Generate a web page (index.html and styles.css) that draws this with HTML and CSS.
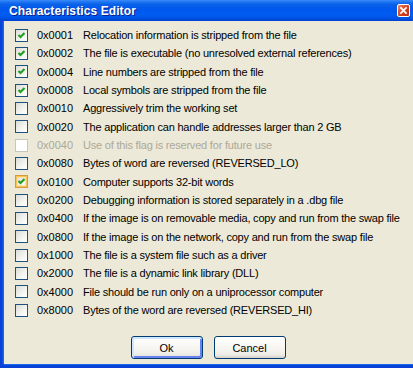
FILE: index.html
```html
<!DOCTYPE html>
<html lang="en">
<head>
    <meta charset="UTF-8">
    <title>Characteristics Editor</title>
    <link rel="stylesheet" href="styles.css">
</head>
<body>
    <div class="window" role="dialog" aria-label="Characteristics Editor">
        <div class="titlebar">
            <span class="title">Characteristics Editor</span>
            <span class="close" aria-label="Close">
                <svg width="13" height="13" viewBox="0 0 13 13">
                    <path d="M3.5 3.5 L9.5 9.5 M9.5 3.5 L3.5 9.5" stroke="#fff" stroke-width="2" stroke-linecap="square"/>
                </svg>
            </span>
        </div>

        <div class="client">
            <ul class="flags">
                <li class="flag"><span class="box checked"><svg viewBox="0 0 11 11"><path d="M2.5 5 L4.5 7 L8.5 3"/></svg></span><span class="hex">0x0001</span><span class="desc">Relocation information is stripped from the file</span></li>
                <li class="flag"><span class="box checked"><svg viewBox="0 0 11 11"><path d="M2.5 5 L4.5 7 L8.5 3"/></svg></span><span class="hex">0x0002</span><span class="desc">The file is executable (no unresolved external references)</span></li>
                <li class="flag"><span class="box checked"><svg viewBox="0 0 11 11"><path d="M2.5 5 L4.5 7 L8.5 3"/></svg></span><span class="hex">0x0004</span><span class="desc">Line numbers are stripped from the file</span></li>
                <li class="flag"><span class="box checked"><svg viewBox="0 0 11 11"><path d="M2.5 5 L4.5 7 L8.5 3"/></svg></span><span class="hex">0x0008</span><span class="desc">Local symbols are stripped from the file</span></li>
                <li class="flag"><span class="box"></span><span class="hex">0x0010</span><span class="desc">Aggressively trim the working set</span></li>
                <li class="flag"><span class="box"></span><span class="hex">0x0020</span><span class="desc">The application can handle addresses larger than 2 GB</span></li>
                <li class="flag disabled"><span class="box"></span><span class="hex">0x0040</span><span class="desc">Use of this flag is reserved for future use</span></li>
                <li class="flag"><span class="box"></span><span class="hex">0x0080</span><span class="desc">Bytes of word are reversed (REVERSED_LO)</span></li>
                <li class="flag"><span class="box checked hover"><svg viewBox="0 0 11 11"><path d="M2.5 5 L4.5 7 L8.5 3"/></svg></span><span class="hex">0x0100</span><span class="desc">Computer supports 32-bit words</span></li>
                <li class="flag"><span class="box"></span><span class="hex">0x0200</span><span class="desc">Debugging information is stored separately in a .dbg file</span></li>
                <li class="flag"><span class="box"></span><span class="hex">0x0400</span><span class="desc">If the image is on removable media, copy and run from the swap file</span></li>
                <li class="flag"><span class="box"></span><span class="hex">0x0800</span><span class="desc">If the image is on the network, copy and run from the swap file</span></li>
                <li class="flag"><span class="box"></span><span class="hex">0x1000</span><span class="desc">The file is a system file such as a driver</span></li>
                <li class="flag"><span class="box"></span><span class="hex">0x2000</span><span class="desc">The file is a dynamic link library (DLL)</span></li>
                <li class="flag"><span class="box"></span><span class="hex">0x4000</span><span class="desc">File should be run only on a uniprocessor computer</span></li>
                <li class="flag"><span class="box"></span><span class="hex">0x8000</span><span class="desc">Bytes of the word are reversed (REVERSED_HI)</span></li>
            </ul>

            <div class="buttons">
                <button class="btn default">Ok</button>
                <button class="btn">Cancel</button>
            </div>
        </div>
    </div>
</body>
</html>
```

FILE: styles.css
```css
/* Global Styles */
body {
    margin: 0;
    padding: 0;
    font-family: 'Liberation Sans', Arial, sans-serif;
    font-size: 11px;
    color: #000;
    background: #ece9d8;
}

.window {
    width: 413px;
    height: 368px;
    display: flex;
    flex-direction: column;
    background: #0842d6;
}

/* Title Bar */
.titlebar {
    height: 21px;
    flex: none;
    display: flex;
    align-items: center;
    justify-content: space-between;
    padding: 0 3px 0 9px;
    background: linear-gradient(to bottom, #3d8cf8 0, #2b7ff6 1px, #0a63e8 4px, #0058ee 9px, #005cf2 15px, #0053e6 18px, #0041d0 21px);
}

.title {
    color: #fff;
    font-weight: bold;
    font-size: 12px;
    letter-spacing: 0.1px;
    text-shadow: 1px 1px 0 #0a1e8c;
    margin-top: 1px;
}

.close {
    width: 13px;
    height: 13px;
    border: 1px solid #fff;
    border-radius: 2px;
    background: linear-gradient(135deg, #e88a6f, #d8431f 50%, #c1300e);
    box-sizing: border-box;
    display: flex;
    align-items: center;
    justify-content: center;
}

.close svg {
    width: 11px;
    height: 11px;
}

/* Client Area */
.client {
    flex: 1;
    margin: 0 0 4px 4px;
    background: #ece9d8;
    display: flex;
    flex-direction: column;
    box-shadow: -1px 0 0 #166aee, -2px 0 0 #0a4fe0, 0 1px 0 #166aee;
}

.flags {
    list-style: none;
    margin: 0;
    padding: 5px 0 0 11px;
}

.flag {
    height: 18.33px;
    display: flex;
    align-items: center;
    white-space: nowrap;
}

.box {
    width: 13px;
    height: 13px;
    box-sizing: border-box;
    border: 1px solid #1c5180;
    background: linear-gradient(135deg, #dcdcd7 0, #f4f4f0 60%, #fff 100%);
    flex: none;
    display: flex;
    align-items: center;
    justify-content: center;
}

.box svg {
    width: 11px;
    height: 11px;
    fill: none;
    stroke: #21a121;
    stroke-width: 2.2;
}

.box.hover {
    border-color: #d29c3c;
    box-shadow: inset 0 0 0 1px #f9c35a, inset 0 0 0 2px #fde2a5;
}

.hex {
    width: 46px;
    margin-left: 9px;
    flex: none;
}

.desc {
    letter-spacing: -0.2px;
}

.flag.disabled {
    color: #aca899;
}

.flag.disabled .box {
    border-color: #c9c7ba;
    background: #fff;
}

/* Buttons */
.buttons {
    display: flex;
    justify-content: center;
    gap: 11px;
    margin-top: 17px;
    padding-right: 1px;
}

.btn {
    width: 72px;
    height: 23px;
    font-family: 'Liberation Sans', Arial, sans-serif;
    font-size: 11px;
    color: #000;
    border: 1px solid #003c74;
    border-radius: 3px;
    background: linear-gradient(to bottom, #fff 0, #f5f4ef 60%, #ecebe6 85%, #d6d0c5 100%);
    padding: 0;
}

.btn.default {
    box-shadow: inset 1px 1px 0 1px #cee7ff, inset -1px -1px 0 1px #6982ee;
}
```
